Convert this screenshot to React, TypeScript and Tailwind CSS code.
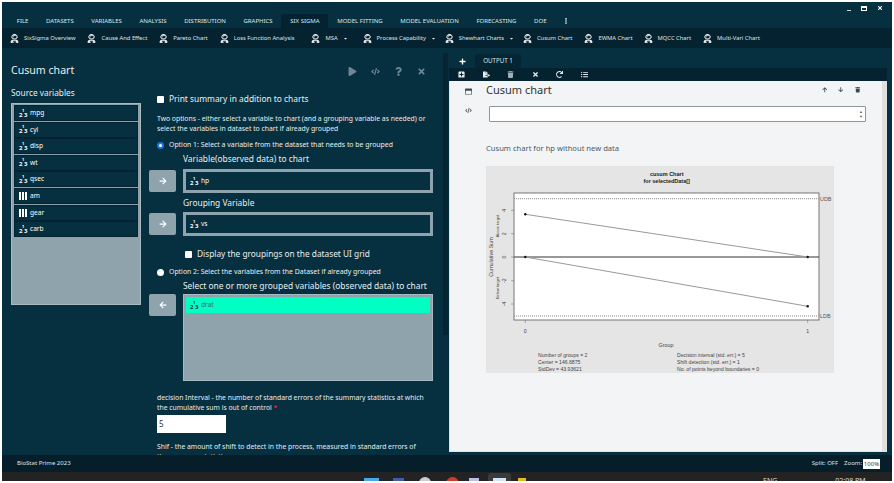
import { FaUserAstronaut, FaPlay, FaCode, FaQuestion, FaTimes, FaArrowRight, FaArrowLeft, FaPlus, FaRegWindowMaximize, FaFileExport, FaTrash, FaRedo, FaListUl, FaArrowUp, FaArrowDown, FaCaretDown, FaEllipsisV, FaPlusSquare } from 'react-icons/fa';

const font = { fontFamily: '"Noto Sans", "Open Sans", sans-serif' };

const tabs = ['FILE', 'DATASETS', 'VARIABLES', 'ANALYSIS', 'DISTRIBUTION', 'GRAPHICS', 'SIX SIGMA', 'MODEL FITTING', 'MODEL EVALUATION', 'FORECASTING', 'DOE'];

const tools = [
  { label: 'SixSigma Overview', gap: 'mr-[12px]' },
  { label: 'Cause And Effect', gap: 'mr-[12px]' },
  { label: 'Pareto Chart', gap: 'mr-[12px]' },
  { label: 'Loss Function Analysis', gap: 'mr-[17px]' },
  { label: 'MSA', caret: true, gap: 'mr-[15px]' },
  { label: 'Process Capability', caret: true, gap: 'mr-[9px]' },
  { label: 'Shewhart Charts', caret: true, gap: 'mr-[9px]' },
  { label: 'Cusum Chart', gap: 'mr-[12px]' },
  { label: 'EWMA Chart', gap: 'mr-[11px]' },
  { label: 'MQCC Chart', gap: 'mr-[12px]' },
  { label: 'Multi-Vari Chart', gap: 'mr-[11px]' },
];

const sourceVars = [
  { name: 'mpg' },
  { name: 'cyl' },
  { name: 'disp' },
  { name: 'wt' },
  { name: 'qsec' },
  { name: 'am', ordinal: true },
  { name: 'gear', ordinal: true },
  { name: 'carb' },
];

// little "2 1 3" scale marker in front of numeric variables
function ScaleIcon({ dark }: { dark?: boolean }) {
  return (
    <span className={`relative inline-block w-[9px] h-[9px] shrink-0 font-bold leading-none ${dark ? 'text-[#06303f]' : 'text-white'}`}>
      <span className="absolute left-0 top-[3px] text-[6px] leading-none">2</span>
      <span className="absolute left-[3px] top-0 text-[4px] leading-none">1</span>
      <span className="absolute left-[5px] top-[3px] text-[6px] leading-none">3</span>
    </span>
  );
}

function OrdinalIcon() {
  return (
    <span className="flex gap-[1px] w-[9px] h-[8px] shrink-0">
      <span className="w-[2px] h-full bg-white" />
      <span className="w-[2px] h-full bg-white" />
      <span className="w-[2px] h-full bg-white" />
    </span>
  );
}

function VarRow({ name, ordinal }: { name: string; ordinal?: boolean }) {
  return (
    <div className="h-[16px] mb-[0.6px] flex items-center gap-[2px] pl-[4px] bg-[#06303f] border border-[#04222f] text-[6.6px] text-white">
      {ordinal ? <OrdinalIcon /> : <ScaleIcon />}
      <span>{name}</span>
    </div>
  );
}

function MoveButton({ left, className }: { left?: boolean; className?: string }) {
  return (
    <div className={`w-[27px] h-[22px] rounded-[2px] bg-[#8fa3ac] flex items-center justify-center text-white text-[8px] ${className ?? ''}`}>
      {left ? <FaArrowLeft /> : <FaArrowRight />}
    </div>
  );
}

function TargetBox({ name }: { name: string }) {
  return (
    <div className="w-[250px] h-[24px] border-[3px] border-[#8fa3ac] bg-[#06303f] flex items-center gap-[2px] pl-[4px] text-[6.6px] text-white">
      <ScaleIcon />
      <span>{name}</span>
    </div>
  );
}

function CusumPlot() {
  const chartFont = '"Liberation Sans", Arial, sans-serif';
  const yTicks = [
    { v: '4', y: 44.3 },
    { v: '2', y: 67.7 },
    { v: '0', y: 91 },
    { v: '-2', y: 114.7 },
    { v: '-4', y: 138 },
  ];
  return (
    <svg width="348" height="207" viewBox="0 0 348 207" className="block" fontFamily={chartFont}>
      <rect width="348" height="207" fill="#e5e5e5" />
      <text x="180.7" y="9.5" fontSize="5.5" fontWeight="bold" textAnchor="middle" fill="#222">cusum Chart</text>
      <text x="180.7" y="16.5" fontSize="5.5" fontWeight="bold" textAnchor="middle" fill="#222">for selectedData[]</text>
      <rect x="28" y="27" width="305" height="127" fill="#fff" stroke="#777" strokeWidth="1" />
      <line x1="28" x2="333" y1="32.7" y2="32.7" stroke="#888" strokeWidth="1" strokeDasharray="1 1" />
      <line x1="28" x2="333" y1="150" y2="150" stroke="#888" strokeWidth="1" strokeDasharray="1 1" />
      <line x1="28" x2="333" y1="91" y2="91" stroke="#333" strokeWidth="1" />
      <polyline points="39.3,48.3 321.7,91" fill="none" stroke="#999" strokeWidth="1" />
      <polyline points="39.3,91 321.7,140.3" fill="none" stroke="#999" strokeWidth="1" />
      <circle cx="39.3" cy="48.3" r="1.2" fill="#111" />
      <circle cx="39.3" cy="91" r="1.2" fill="#111" />
      <circle cx="321.7" cy="91" r="1.2" fill="#111" />
      <circle cx="321.7" cy="140.3" r="1.2" fill="#111" />
      {yTicks.map((t) => (
        <g key={t.v}>
          <line x1="25" x2="28" y1={t.y} y2={t.y} stroke="#666" strokeWidth="0.5" />
          <text x="0" y="0" fontSize="5.2" textAnchor="middle" fill="#444" transform={`translate(20 ${t.y}) rotate(-90)`}>{t.v}</text>
        </g>
      ))}
      <text fontSize="5.4" textAnchor="middle" fill="#444" transform="translate(7 91) rotate(-90)">Cumulative Sum</text>
      <text fontSize="4" textAnchor="middle" fill="#444" transform="translate(13 60) rotate(-90)">Above target</text>
      <text fontSize="4" textAnchor="middle" fill="#444" transform="translate(13 122) rotate(-90)">Below target</text>
      <text x="334" y="34.7" fontSize="5.4" fill="#555">UDB</text>
      <text x="334" y="152" fontSize="5.4" fill="#555">LDB</text>
      <line x1="39.3" x2="39.3" y1="154" y2="157" stroke="#666" strokeWidth="0.5" />
      <line x1="321.7" x2="321.7" y1="154" y2="157" stroke="#666" strokeWidth="0.5" />
      <text x="39.3" y="167" fontSize="5.2" textAnchor="middle" fill="#444">0</text>
      <text x="321.7" y="167" fontSize="5.2" textAnchor="middle" fill="#444">1</text>
      <text x="180" y="181" fontSize="5.4" textAnchor="middle" fill="#444">Group</text>
      <g fontSize="5.1" fill="#444">
        <text x="52" y="191">Number of groups = 2</text>
        <text x="52" y="198">Center = 146.6875</text>
        <text x="52" y="205">StdDev = 43.93621</text>
        <text x="191" y="191">Decision interval (std. err.) = 5</text>
        <text x="191" y="198">Shift detection (std. err.) = 1</text>
        <text x="191" y="205">No. of points beyond boundaries = 0</text>
      </g>
    </svg>
  );
}

export default function App() {
  return (
    <div className="w-[894px] h-[483px] bg-white p-[2px] overflow-hidden" style={font}>
      <div className="w-[890px] h-[479px] flex flex-col bg-[#06303f] overflow-hidden">
        {/* Window controls */}
        <div className="h-[12px] shrink-0 flex items-center justify-end pr-[9px] gap-[10px] text-white">
          <span className="w-[4px] h-[1px] mt-[4px] bg-[#cfd8dc]" />
          <span className="w-[6px] h-[5px] border border-t-2 border-white" />
          <FaTimes className="text-[6px]" />
        </div>

        {/* Menu tabs */}
        <div className="h-[14px] shrink-0 flex items-stretch pl-[6px] text-[6px] text-[#dfe6e9]">
          {tabs.map((t) => (
            <div key={t} className={`px-[8.8px] flex items-center whitespace-nowrap ${t === 'SIX SIGMA' ? 'bg-[#04222f] rounded-t-[2px]' : ''}`}>
              {t}
            </div>
          ))}
          <div className="px-[8px] flex items-center text-[6px] text-white">
            <FaEllipsisV />
          </div>
        </div>

        {/* Tool ribbon */}
        <div className="h-[20px] shrink-0 bg-[#04222f] flex items-center pl-[8px] text-[5.8px] text-[#dfe6e9]">
          {tools.map((t) => (
            <div key={t.label} className={`flex items-center gap-[5px] whitespace-nowrap ${t.gap}`}>
              <FaUserAstronaut className="text-[9px] text-[#e8eef0]" />
              <span>{t.label}</span>
              {t.caret && <FaCaretDown className="text-[5px]" />}
            </div>
          ))}
        </div>

        {/* Main area */}
        <div className="flex-1 min-h-0 flex">
          <div className="w-[441px] shrink-0 overflow-hidden pl-[9px] pt-[15px]">
            <div className="flex items-center justify-between pr-[17px] h-[16px]">
              <h1 className="text-[10.6px] text-[#e8eef0]">Cusum chart</h1>
              <div className="flex items-center gap-[14px] text-[#6f8791] text-[9px]">
                <FaPlay />
                <FaCode />
                <FaQuestion />
                <FaTimes />
              </div>
            </div>

            <div className="flex mt-[8px]">
              {/* Source variables */}
              <div className="w-[130px] shrink-0">
                <div className="text-[8.3px] text-[#e8eef0] leading-[12px] h-[16px]">Source variables</div>
                <div className="h-[202px] bg-[#8fa3ac] border border-[#a9b9c0] px-[2px] pt-[1px]">
                  {sourceVars.map((v) => (
                    <VarRow key={v.name} name={v.name} ordinal={v.ordinal} />
                  ))}
                </div>
              </div>

              {/* Options */}
              <div className="ml-[8px] flex-1 min-w-0 text-[#e8eef0]">
                <div className="ml-[8px] mt-[6px] flex items-center gap-[5px] text-[8.4px] h-[12px]">
                  <span className="w-[7px] h-[7px] bg-white rounded-[1px]" />
                  Print summary in addition to charts
                </div>
                <p className="ml-[8px] mt-[9px] w-[270px] text-[6.8px] leading-[10px]">
                  Two options - either select a variable to chart (and a grouping variable as needed) or select the variables in dataset to chart if already grouped
                </p>
                <div className="ml-[8px] mt-[6px] flex items-center gap-[5px] text-[6.9px] h-[10px]">
                  <span className="w-[7px] h-[7px] rounded-full bg-white border-[2px] border-[#1a73e8]" />
                  Option 1: Select a variable from the dataset that needs to be grouped
                </div>
                <div className="ml-[34px] mt-[3px] text-[8.4px] h-[12px] leading-[12px]">Variable(observed data) to chart</div>
                <div className="flex items-center gap-[7px] mt-[4px]">
                  <MoveButton />
                  <TargetBox name="hp" />
                </div>
                <div className="ml-[34px] mt-[4px] text-[8.4px] h-[12px] leading-[12px]">Grouping Variable</div>
                <div className="flex items-center gap-[7px] mt-[3px]">
                  <MoveButton />
                  <TargetBox name="vs" />
                </div>
                <div className="ml-[36px] mt-[12px] flex items-center gap-[5px] text-[8.3px] h-[12px]">
                  <span className="w-[7px] h-[7px] bg-white rounded-[1px]" />
                  Display the groupings on the dataset UI grid
                </div>
                <div className="ml-[8px] mt-[7px] flex items-center gap-[5px] text-[6.9px] h-[10px]">
                  <span className="w-[7px] h-[7px] rounded-full bg-white" />
                  Option 2: Select the variables from the Dataset if already grouped
                </div>
                <div className="ml-[34px] mt-[3px] text-[8.4px] h-[12px] leading-[12px]">Select one or more grouped variables (observed data) to chart</div>
                <div className="flex items-start gap-[7px] mt-[2px]">
                  <MoveButton left />
                  <div className="w-[250px] h-[87px] bg-[#8fa3ac] border border-[#a9b9c0] px-[2px] pt-[2px]">
                    <div className="h-[16px] bg-[#00ffc3] flex items-center gap-[2px] pl-[4px] text-[6.6px] text-[#2f6f6a]">
                      <ScaleIcon dark />
                      <span>drat</span>
                    </div>
                  </div>
                </div>
                <p className="ml-[8px] mt-[12px] w-[270px] text-[6.8px] leading-[9.5px]">
                  decision Interval - the number of standard errors of the summary statistics at which the cumulative sum is out of control <span className="text-red-500">*</span>
                </p>
                <div className="ml-[8px] mt-[3px] w-[69px] h-[18px] bg-white text-[8px] text-[#333] flex items-center pl-[2px]">5</div>
                <p className="ml-[8px] mt-[9px] w-[270px] text-[6.8px] leading-[9.5px]">
                  Shif - the amount of shift to detect in the process, measured in standard errors of the summary statistics
                </p>
              </div>
            </div>
          </div>

          {/* Splitter */}
          <div className="w-[5px] h-[282px] mt-[5px] shrink-0 bg-[#052532]" />

          {/* Output */}
          <div className="ml-[1px] w-[438px] shrink-0 flex flex-col pb-[3px]">
            <div className="h-[20px] shrink-0 flex items-end">
              <div className="w-[26px] h-[14px] flex items-center justify-center text-white text-[7px]">
                <FaPlus />
              </div>
              <div className="w-[46px] h-[14px] bg-[#052532] rounded-t-[2px] flex items-center justify-center text-[6.2px] text-[#dfe6e9]">OUTPUT 1</div>
            </div>
            <div className="h-[13px] shrink-0 bg-[#04222f] flex items-center pl-[9px] gap-[17.5px] text-[7px] text-[#e8eef0]">
              <FaPlusSquare />
              <FaFileExport />
              <FaTrash className="text-[#9fb0b7]" />
              <FaTimes />
              <FaRedo />
              <FaListUl />
            </div>
            <div className="flex-1 min-h-0 flex bg-[#f3f4f6] border-l border-b border-[#dfe3e6] overflow-hidden">
              <div className="w-[36px] shrink-0 flex flex-col items-center pt-[7px] gap-[12px] text-[7px] text-[#3b4a52]">
                <FaRegWindowMaximize />
                <FaCode className="text-[#5b6b73]" />
              </div>
              <div className="flex-1 min-w-0">
                <div className="flex items-center justify-between h-[18px] pr-[22px]">
                  <h2 className="text-[11px] text-[#333]">Cusum chart</h2>
                  <div className="flex gap-[11px] text-[5.5px] text-[#3b4a52]">
                    <FaArrowUp />
                    <FaArrowDown />
                    <FaTrash />
                  </div>
                </div>
                <div className="ml-[3px] mt-[7px] w-[377px] h-[16px] bg-white border border-[#8a979d] rounded-[1px] flex justify-end items-center pr-[2px] text-[4px] text-[#666]">
                  <div className="flex flex-col leading-[5px]">
                    <span>▲</span>
                    <span>▼</span>
                  </div>
                </div>
                <div className="mt-[20px] text-[7.6px] leading-[12px] text-[#4a5a62]">Cusum chart for hp without new data</div>
                <div className="mt-[12px]">
                  <CusumPlot />
                </div>
              </div>
              <div className="w-[5px] shrink-0 bg-[#e0e0e0]" />
            </div>
          </div>
        </div>

        {/* Status bar */}
        <div className="h-[17px] shrink-0 bg-[#051e29] flex items-center justify-between pl-[15px] pr-[12px] text-[6px] text-[#dfe6e9]">
          <span>BioStat Prime 2023</span>
          <div className="flex items-center gap-[6px]">
            <span>Split: OFF</span>
            <div className="flex items-center gap-[1px]">
              <span>Zoom:</span>
              <span className="w-[17px] h-[10px] bg-white text-[#333] text-center leading-[10px]">100%</span>
            </div>
          </div>
        </div>

        {/* Taskbar, only the top of it is in the shot */}
        <div className="h-[9px] shrink-0 bg-[#232323] overflow-hidden flex items-start pl-[362px] text-[#dddddd]">
          <div className="w-[15px] h-[14px] mt-[6px] bg-[#4aa8e8]" />
          <div className="ml-[14px] w-[11px] h-[14px] mt-[6px] bg-[#3d5db0]" />
          <div className="ml-[15px] w-[12px] h-[14px] mt-[5px] rounded-t-full bg-[#c9ced2]" />
          <div className="ml-[15px] w-[13px] h-[14px] mt-[5px] rounded-t-full bg-[#d33a2c]" />
          <div className="ml-[10px] w-[10px] h-[14px] mt-[6px] bg-[#b9bfe6]" />
          <div className="ml-[9px] w-[23px] h-[14px] mt-[1px] rounded-t-[3px] bg-[#3a3a3a] flex justify-center">
            <div className="w-[13px] h-[12px] mt-[5px] bg-[#cfe6f5]" />
          </div>
          <div className="ml-[7px] w-[8px] h-[14px] mt-[6px] bg-[#e8b923]" />
          <span className="ml-[237px] mt-[4px] text-[7px] leading-[9px]">ENG</span>
          <span className="ml-[58px] mt-[4px] text-[7px] leading-[9px]">02:08 PM</span>
        </div>
      </div>
    </div>
  );
}
